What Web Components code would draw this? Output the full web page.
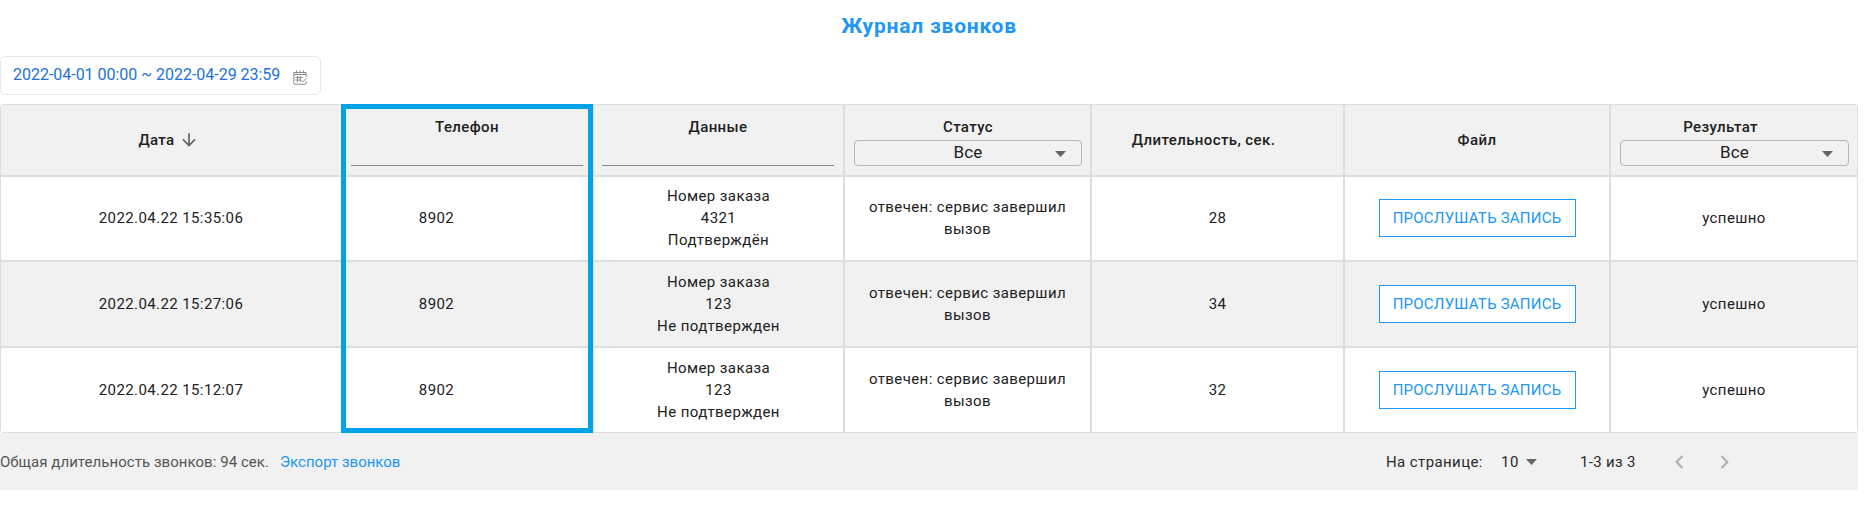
<!DOCTYPE html>
<html lang="ru">
<head>
<meta charset="utf-8">
<title>Журнал звонков</title>
<style>
  body { margin: 0; background: #fff; font-family: Roboto, "Liberation Sans", sans-serif; }
</style>
</head>
<body>
<call-journal></call-journal>
<script>
const define = (name, html) => {
  const t = document.createElement('template');
  t.innerHTML = html;
  customElements.define(name, class extends HTMLElement {
    constructor() {
      super();
      this.attachShadow({ mode: 'open' }).append(t.content.cloneNode(true));
    }
  });
};

define('page-title', `
<style>
  :host { display: block; height: 56px; box-sizing: border-box; padding: 14px 0 0; width: 1858px; text-align: center; }
  h1 { margin: 0; font-size: 21px; line-height: 24px; font-weight: 700; letter-spacing: .78px; color: #2196f3; }
</style>
<h1><slot></slot></h1>`);

define('date-range', `
<style>
  :host { display: flex; box-sizing: border-box; width: 321px; height: 39px; border: 1px solid #e4e7ed; border-radius: 6px;
    padding: 0 13px 0 12px; justify-content: space-between; color: #2471dc; font-size: 16px; line-height: 36px; background: #fff; letter-spacing: -.02px; }
  svg { width: 14px; height: 15px; margin-top: 13px; }
</style>
<span><slot></slot></span>
<svg viewBox="0 0 14 15" fill="none" stroke="#8d8d8d" stroke-width="1">
  <path d="M.8 4.5V2.5h12.4v4.7M.8 4.5h12.4M.8 4.5v8.7q0 1 1 1h10.4q1 0 1-1v-2M3.5.5v3M7 .5v3M10.5.5v3M2.3 7.5h7.5M2.3 10h6M4.5 5.8v6.5M7.3 5.8v6M8.5 10.3l1.6 1.6 3.2-3.8"/>
</svg>`);

define('head-cell', `
<style>
  :host { display: flex; flex-direction: column; box-sizing: border-box; border: 1px solid #ddd; background: #f1f1f1;
    padding: 0 9px; justify-content: center; font-size: 15px; line-height: 22px; font-weight: 500; letter-spacing: .4px; color: #212121; }
  :host([filter]) { justify-content: flex-start; padding: 11px 8px 0 9px; }
  :host([filter=text]) { padding: 11px 9px 0 8px; }
  .label { display: flex; justify-content: center; align-items: center; gap: 4px; }
  :host([inset]) .label { padding-right: 28px; }
  :host([sorted]) .label { padding-right: 5px; }
  ::slotted([slot=filter]) { margin-top: 2px; }
</style>
<div class="label"><slot></slot></div><slot name="filter"></slot>`);

define('sort-arrow', `
<style>:host { display: block; width: 20px; height: 20px; } svg { display: block; }</style>
<svg width="20" height="20" viewBox="0 0 24 24" fill="#616161"><path d="M20 12l-1.41-1.41L13 16.17V4h-2v12.17l-5.58-5.59L4 12l8 8 8-8z"/></svg>`);

define('text-filter', `
<style>:host { display: block; height: 26px; box-sizing: border-box; border-bottom: 1px solid #8a8a8a; }</style>`);

define('select-filter', `
<style>
  :host { display: grid; grid-template-columns: 30px 1fr 30px; align-items: center; height: 26px; box-sizing: border-box; border: 1px solid #b5b5b5;
    border-radius: 4px; font-size: 17px; line-height: 22px; font-weight: 400; letter-spacing: .2px; }
  span { grid-column: 2; text-align: center; padding-bottom: 2px; }
  svg { margin-left: 4px; margin-top: 2px; }
</style>
<span><slot></slot></span>
<svg width="11" height="6" viewBox="0 0 11 6"><path d="M0 0h11L5.5 6z" fill="#666"/></svg>`);

define('data-cell', `
<style>
  :host { display: flex; box-sizing: border-box; border: 1px solid #ddd; align-items: center; justify-content: center; text-align: center;
    background: var(--row-bg, #fff); font-size: 15px; line-height: 22px; letter-spacing: .4px; color: #212121; padding: 0 17px; white-space: pre-line; }
  :host([phone]) { padding-right: 79px; }
  :host([first]) { padding-bottom: 1px; }
</style>
<div><slot></slot></div>`);

define('listen-button', `
<style>
  :host { display: block; white-space: normal; }
  button { display: block; box-sizing: border-box; width: 197px; height: 38px; padding: 0 0 1px; margin: 0; border: 1px solid #2196f3; background: #fff;
    color: #2196f3; font: 400 15px/34px Roboto, "Liberation Sans", sans-serif; letter-spacing: .22px; white-space: nowrap; }
</style>
<button><slot></slot></button>`);

define('page-footer', `
<style>
  :host { display: flex; align-items: center; box-sizing: border-box; height: 57px; width: 1858px; background: #f1f1f1; font-size: 15px; line-height: 22px; color: #555; }
  .total { width: 280px; letter-spacing: .05px; }
  a { color: #2196f3; }
  .pager { margin-left: auto; display: flex; align-items: center; color: #2b2b2b; padding-right: 126px; }
  .label { width: 115px; letter-spacing: .4px; }
  .size { width: 25px; letter-spacing: .6px; }
  .range { width: 92px; margin-left: 43px; letter-spacing: .33px; }
  .nav { display: block; margin-right: 32px; }
  .nav:last-child { margin-right: 0; }
</style>
<span class="total">Общая длительность звонков: 94 сек.</span>
<a>Экспорт звонков</a>
<div class="pager">
  <span class="label">На странице:</span>
  <span class="size">10</span>
  <svg width="11" height="6" viewBox="0 0 11 6"><path d="M0 0h11L5.5 6z" fill="#666"/></svg>
  <span class="range">1-3 из 3</span>
  <svg class="nav" width="14" height="14" viewBox="0 0 14 14" fill="none" stroke="#aeaeae" stroke-width="2"><path d="M10.5 1L4.6 7l5.9 6"/></svg>
  <svg class="nav" width="14" height="14" viewBox="0 0 14 14" fill="none" stroke="#aeaeae" stroke-width="2"><path d="M3.5 1l5.9 6-5.9 6"/></svg>
</div>`);

define('call-table', `
<style>
  :host { display: grid; position: relative; width: 1858px; margin-top: 9px; overflow: hidden; border-radius: 4px;
    grid-template-columns: 342px 251px 251px 247px 253px 266px 248px; grid-template-rows: 72px 85px 86px 86px; }
  :host::after { content: ""; position: absolute; left: 341px; top: 0; width: 252px; height: 329px; box-sizing: border-box; border: 5px solid #00a2e8; }
</style>
<slot></slot>`);

const calls = [
  ['2022.04.22 15:35:06', '4321\nПодтверждён', 28],
  ['2022.04.22 15:27:06', '123\nНе подтвержден', 34],
  ['2022.04.22 15:12:07', '123\nНе подтвержден', 32]
];

define('call-journal', `
<style>
  :host { display: block; height: 513px; background: #fff; overflow: hidden; }
  .alt { --row-bg: #f1f1f1; }
</style>
<page-title>Журнал звонков</page-title>
<date-range>2022-04-01 00:00 ~ 2022-04-29 23:59</date-range>
<call-table>
  <head-cell sorted>Дата<sort-arrow></sort-arrow></head-cell>
  <head-cell filter="text">Телефон<text-filter slot="filter"></text-filter></head-cell>
  <head-cell filter="text">Данные<text-filter slot="filter"></text-filter></head-cell>
  <head-cell filter="select">Статус<select-filter slot="filter">Все</select-filter></head-cell>
  <head-cell inset>Длительность, сек.</head-cell>
  <head-cell>Файл</head-cell>
  <head-cell filter="select" inset>Результат<select-filter slot="filter">Все</select-filter></head-cell>
  ${calls.map(([date, data, length], i) => {
    const c = i % 2 ? 'class="alt"' : i ? '' : 'first';
    return `<data-cell ${c}>${date}</data-cell><data-cell ${c} phone>8902</data-cell><data-cell ${c}>Номер заказа\n${data}</data-cell>` +
      `<data-cell ${c}>отвечен: сервис завершил вызов</data-cell><data-cell ${c}>${length}</data-cell>` +
      `<data-cell ${c}><listen-button>ПРОСЛУШАТЬ ЗАПИСЬ</listen-button></data-cell><data-cell ${c}>успешно</data-cell>`;
  }).join('')}
</call-table>
<page-footer></page-footer>`);
</script>
</body>
</html>
